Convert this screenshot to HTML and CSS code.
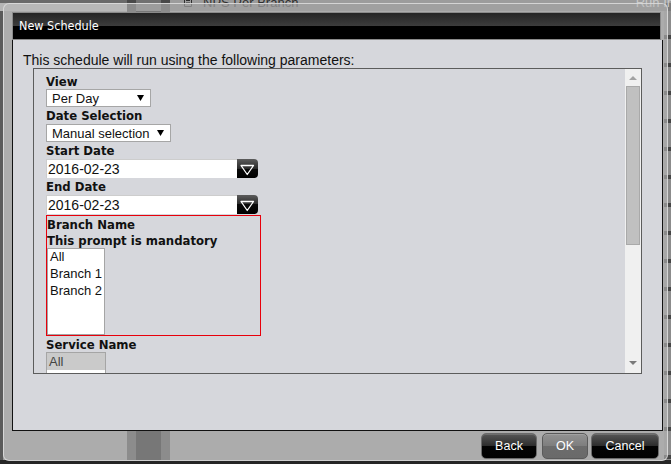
FILE: index.html
```html
<!DOCTYPE html>
<html lang="en">
<head>
  <meta charset="UTF-8">
  <title>New Schedule</title>
  <link rel="stylesheet" href="styles.css">
</head>
<body>
  <!-- page behind the dialog -->
  <div class="app">
    <div class="app-nav app-nav-top"></div>
    <div class="app-col app-col-top"></div>
    <div class="app-bar">
      <span class="bar-item">
        <svg class="doc-icon" width="10" height="9" viewBox="0 0 10 9">
          <path d="M1.5 -3 H8.5 V7.5 H1.5 Z M3 1.5 H7 M3 4 H7" fill="none" stroke="#2f2f2f" stroke-width="1"/>
        </svg>
        NPS Per Branch
      </span>
      <span class="bar-run">Run In</span>
    </div>
    <div class="app-nav"></div>
    <div class="app-col"></div>
    <div class="app-main"></div>
    <div class="app-edge"></div>
    <div class="app-foot"></div>
  </div>

  <div class="dialog">
    <div class="dialog-title">New Schedule</div>

    <div class="dialog-panel">
      <p class="intro">This schedule will run using the following parameters:</p>

      <div class="params">
        <div class="params-body">
          <div class="label label-first">View</div>
          <div class="select select-view">
            <span>Per Day</span>
            <svg width="7" height="6" viewBox="0 0 7 6"><path d="M0 0 H7 L3.5 6 Z" fill="#000"/></svg>
          </div>

          <div class="label">Date Selection</div>
          <div class="select select-date">
            <span>Manual selection</span>
            <svg width="7" height="6" viewBox="0 0 7 6"><path d="M0 0 H7 L3.5 6 Z" fill="#000"/></svg>
          </div>

          <div class="label">Start Date</div>
          <div class="date">
            <div class="date-input">2016-02-23</div>
            <div class="date-btn">
              <svg width="21" height="19" viewBox="0 0 21 19"><path d="M4 6.5 H16.5 L10.25 15.5 Z" fill="none" stroke="#fff" stroke-width="1.3" stroke-linejoin="round"/></svg>
            </div>
          </div>

          <div class="label">End Date</div>
          <div class="date">
            <div class="date-input">2016-02-23</div>
            <div class="date-btn">
              <svg width="21" height="19" viewBox="0 0 21 19"><path d="M4 6.5 H16.5 L10.25 15.5 Z" fill="none" stroke="#fff" stroke-width="1.3" stroke-linejoin="round"/></svg>
            </div>
          </div>

          <!-- mandatory prompt -->
          <div class="required">
            <div class="label label-tight">Branch Name</div>
            <div class="label label-tight">This prompt is mandatory</div>
            <div class="listbox listbox-branch">
              <div class="opt">All</div>
              <div class="opt">Branch 1</div>
              <div class="opt">Branch 2</div>
            </div>
          </div>

          <div class="label label-tight">Service Name</div>
          <div class="listbox listbox-service">
            <div class="opt selected">All</div>
            <div class="opt">Service 1</div>
            <div class="opt">Service 2</div>
          </div>
        </div>

        <div class="scrollbar">
          <div class="sb-btn"><span class="sb-up"></span></div>
          <div class="sb-track"><div class="sb-thumb"></div></div>
          <div class="sb-btn sb-btn-down"><span class="sb-down"></span></div>
        </div>
      </div>
    </div>

    <div class="dialog-buttons">
      <button class="btn btn-back">Back</button>
      <button class="btn btn-ok">OK</button>
      <button class="btn btn-cancel">Cancel</button>
    </div>
  </div>
</body>
</html>
```

FILE: styles.css
```css
/* base */
body {
  margin: 0;
  width: 671px;
  height: 464px;
  overflow: hidden;
  position: relative;
  background-color: #262626;
  font-family: "Liberation Sans", Arial, sans-serif;
}

/* page behind the dialog */
.app {
  display: grid;
  grid-template-columns: 127px 43px 494px 7px;
  grid-template-rows: 11px 449px 4px;
  height: 464px;
}
.app-nav {
  background: linear-gradient(90deg, #5a5a5a 3px, #989898 3px);
}
.app-nav-top {
  background: linear-gradient(#6a6a6a 3px, #b6b6b6 3px);
}
.app-col {
  background: linear-gradient(90deg, #4a4a4a 9px, #151515 9px 34px, #4a4a4a 34px);
}
.app-col-top {
  background: linear-gradient(90deg, #484848 9px, #707070 9px 34px, #484848 34px);
}
.app-bar {
  grid-column: 3 / 5;
  display: flex;
  align-items: flex-end;
  overflow: hidden;
  background: linear-gradient(#9c9c9c 3px, #7a7a7a 3px);
  font-size: 13px;
  line-height: 15px;
  color: #2f2f2f;
}
.bar-item {
  display: flex;
  align-items: flex-end;
  gap: 10px;
  margin: 0 0 1px 13px;
}
.doc-icon {
  margin-bottom: 2px;
}
.bar-run {
  margin: 0 -3px 0 auto;
  padding-bottom: 1px;
  color: #cacaca;
}
.app-main {
  background-color: #989898;
}
.app-edge {
  background: repeating-linear-gradient(#8c8c8c 0 24px, #444 24px 28px);
}
.app-foot {
  grid-column: 1 / -1;
  background-color: #262626;
}

/* dialog */
.dialog {
  position: absolute;
  left: 3px;
  top: 3px;
  width: 665px;
  height: 458px;
  box-sizing: border-box;
  padding: 8px 4px 0 8px;
  border: 1px solid rgba(222, 222, 222, 0.85);
  border-radius: 6px;
  background-color: rgba(185, 185, 185, 0.6);
  display: flex;
  flex-direction: column;
}
.dialog-title {
  width: 649px;
  height: 28px;
  box-sizing: border-box;
  padding-left: 6px;
  border: 1px solid #8a8a8a;
  background: linear-gradient(#242424, #3c3c3c 49%, #000 50%);
  color: #fff;
  font-family: "DejaVu Sans Condensed", "DejaVu Sans", sans-serif;
  font-stretch: condensed;
  font-size: 12.5px;
  line-height: 26px;
}
.dialog-panel {
  height: 391px;
  box-sizing: border-box;
  padding: 12px 0 0 10px;
  border: 1px solid #111;
  border-top: 0;
  background-color: #d6d7dc;
}
.intro {
  margin: 0;
  font-size: 14px;
  line-height: 16px;
  color: #111;
}

/* parameter box with its scrollbar */
.params {
  margin-left: 10px;
  width: 609px;
  height: 306px;
  box-sizing: border-box;
  border: 1px solid #5c5c5c;
  display: flex;
}
.params-body {
  flex: 1;
  overflow: hidden;
  padding: 4px 0 0 12px;
}
.label {
  padding-top: 1px;
  font-family: "DejaVu Sans Condensed", "DejaVu Sans", sans-serif;
  font-stretch: condensed;
  font-weight: bold;
  font-size: 13px;
  line-height: 16px;
  color: #111;
}
.label-first,
.label-tight {
  line-height: 15px;
}
.select {
  display: flex;
  align-items: center;
  justify-content: space-between;
  height: 18px;
  box-sizing: border-box;
  padding: 0 6px 0 5px;
  border: 1px solid #a6a6a6;
  background-color: #fff;
  font-size: 13px;
  color: #111;
}
.select-view {
  width: 105px;
}
.select-date {
  width: 125px;
}
.date {
  display: flex;
  height: 19px;
}
.date-input {
  width: 191px;
  box-sizing: border-box;
  padding: 1px 0 0 1px;
  border: 1px solid #cdcdcd;
  border-right: 0;
  border-bottom: 0;
  background-color: #fff;
  font-size: 14px;
  line-height: 17px;
  color: #111;
}
.date-btn {
  width: 21px;
  border-radius: 0 4px 4px 0;
  background: linear-gradient(#5c5c5c, #2a2a2a 50%, #0a0a0a 50%, #000);
}
.date-btn svg {
  display: block;
}
.required {
  margin-top: 1px;
  width: 215px;
  height: 121px;
  box-sizing: border-box;
  border: 1px solid #e8000b;
}
.listbox {
  box-sizing: border-box;
  border: 1px solid #a5a5a5;
  background-color: #fff;
  font-size: 13px;
  line-height: 17px;
  color: #111;
}
.listbox-branch {
  width: 58px;
  height: 87px;
}
.listbox-service {
  width: 60px;
  height: 80px;
}
.listbox .opt {
  padding-left: 2px;
  white-space: nowrap;
}
.listbox-branch .opt:first-child {
  margin-top: -1px;
}
.listbox .selected {
  background-color: #cacaca;
  color: #444;
}

.scrollbar {
  width: 16px;
  background-color: #f0f0f0;
  display: flex;
  flex-direction: column;
}
.sb-btn {
  height: 17px;
  display: flex;
  align-items: center;
  justify-content: center;
}
.sb-btn-down {
  align-items: flex-start;
  box-sizing: border-box;
  padding-top: 5px;
}
.sb-up,
.sb-down {
  width: 0;
  height: 0;
  border-left: 4px solid transparent;
  border-right: 4px solid transparent;
}
.sb-up {
  border-bottom: 4px solid #a3a3a3;
}
.sb-down {
  border-top: 4px solid #7a7a7a;
}
.sb-track {
  flex: 1;
  padding: 0 1px;
}
.sb-thumb {
  height: 159px;
  box-sizing: border-box;
  border: 1px solid #a9a9a9;
  background-color: #c0c0c0;
}

/* buttons */
.dialog-buttons {
  margin-top: 2px;
  padding-right: 4px;
  display: flex;
  justify-content: flex-end;
}
.btn {
  height: 26px;
  box-sizing: border-box;
  padding: 0;
  border: 1px solid #6b6b6b;
  border-radius: 5px;
  background: linear-gradient(#565656, #2c2c2c 50%, #040404 50%, #000);
  box-shadow: inset 0 1px 0 rgba(255, 255, 255, 0.15);
  color: #fff;
  font-family: "Liberation Sans", Arial, sans-serif;
  font-size: 12.5px;
  line-height: 24px;
  text-align: center;
}
.btn-back {
  width: 56px;
  margin-right: 5px;
}
.btn-ok {
  width: 46px;
  margin-right: 3px;
  border-color: #5a5a5a;
  background: linear-gradient(#929292, #7e7e7e 50%, #6c6c6c 50%, #6a6a6a);
}
.btn-cancel {
  width: 68px;
}
```
